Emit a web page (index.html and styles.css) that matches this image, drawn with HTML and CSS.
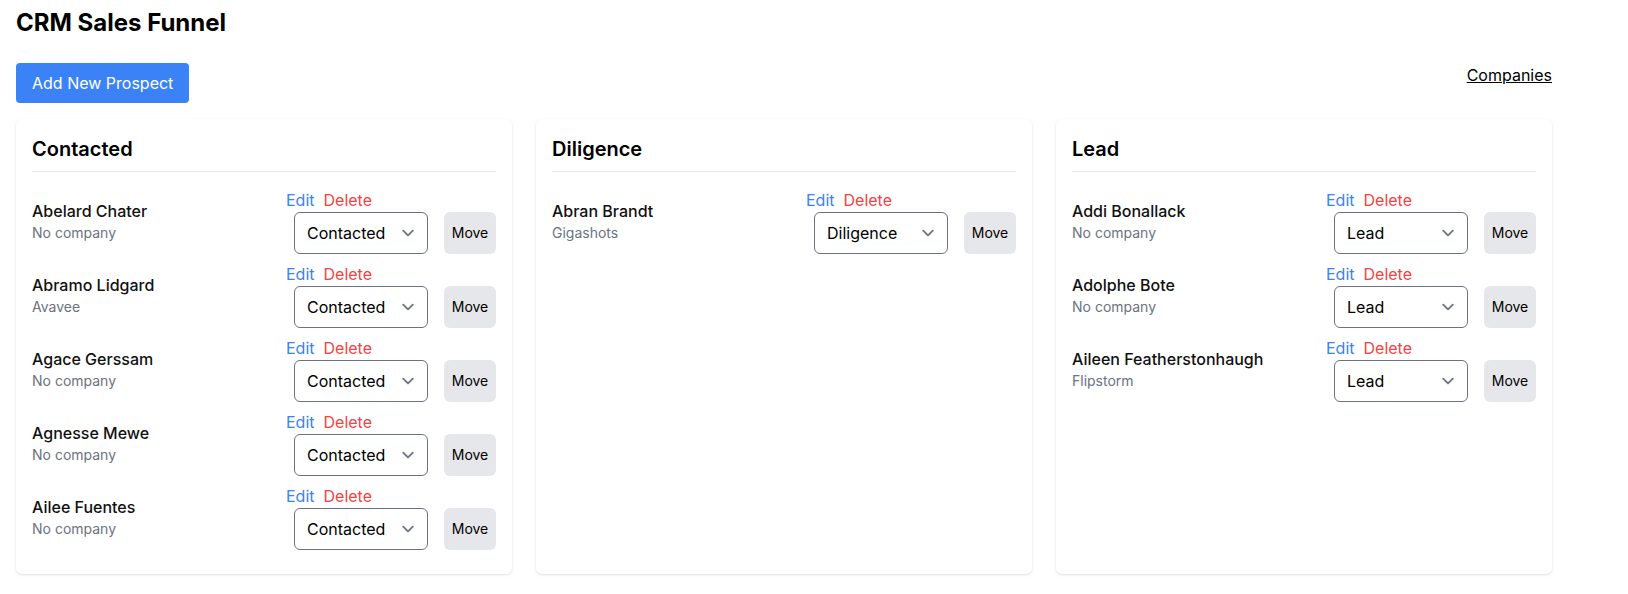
FILE: index.html
```html
<!DOCTYPE html>
<html lang="en">
<head>
<meta charset="utf-8">
<title>CRM Sales Funnel</title>
<link rel="stylesheet" href="styles.css">
</head>
<body>
<div class="page">
  <h1 class="title">CRM Sales Funnel</h1>
  <div class="toolbar">
    <button class="primary-btn">Add New Prospect</button>
    <a class="nav-link" href="#">Companies</a>
  </div>
  <div class="board">
    <section class="column">
      <h2 class="column-title">Contacted</h2>
      <div class="prospect">
        <div class="info"><div class="name">Abelard Chater</div><div class="company">No company</div></div>
        <div class="actions">
          <div class="links"><button class="link edit">Edit</button><button class="link delete">Delete</button></div>
          <div class="controls">
            <div class="select-wrap"><select class="status"><option>Lead</option><option selected>Contacted</option><option>Diligence</option></select><svg class="chevron" viewBox="0 0 20 20"><path d="M6 8l4 4 4-4"/></svg></div>
            <button class="move">Move</button>
          </div>
        </div>
      </div>
      <div class="prospect">
        <div class="info"><div class="name">Abramo Lidgard</div><div class="company">Avavee</div></div>
        <div class="actions">
          <div class="links"><button class="link edit">Edit</button><button class="link delete">Delete</button></div>
          <div class="controls">
            <div class="select-wrap"><select class="status"><option>Lead</option><option selected>Contacted</option><option>Diligence</option></select><svg class="chevron" viewBox="0 0 20 20"><path d="M6 8l4 4 4-4"/></svg></div>
            <button class="move">Move</button>
          </div>
        </div>
      </div>
      <div class="prospect">
        <div class="info"><div class="name">Agace Gerssam</div><div class="company">No company</div></div>
        <div class="actions">
          <div class="links"><button class="link edit">Edit</button><button class="link delete">Delete</button></div>
          <div class="controls">
            <div class="select-wrap"><select class="status"><option>Lead</option><option selected>Contacted</option><option>Diligence</option></select><svg class="chevron" viewBox="0 0 20 20"><path d="M6 8l4 4 4-4"/></svg></div>
            <button class="move">Move</button>
          </div>
        </div>
      </div>
      <div class="prospect">
        <div class="info"><div class="name">Agnesse Mewe</div><div class="company">No company</div></div>
        <div class="actions">
          <div class="links"><button class="link edit">Edit</button><button class="link delete">Delete</button></div>
          <div class="controls">
            <div class="select-wrap"><select class="status"><option>Lead</option><option selected>Contacted</option><option>Diligence</option></select><svg class="chevron" viewBox="0 0 20 20"><path d="M6 8l4 4 4-4"/></svg></div>
            <button class="move">Move</button>
          </div>
        </div>
      </div>
      <div class="prospect">
        <div class="info"><div class="name">Ailee Fuentes</div><div class="company">No company</div></div>
        <div class="actions">
          <div class="links"><button class="link edit">Edit</button><button class="link delete">Delete</button></div>
          <div class="controls">
            <div class="select-wrap"><select class="status"><option>Lead</option><option selected>Contacted</option><option>Diligence</option></select><svg class="chevron" viewBox="0 0 20 20"><path d="M6 8l4 4 4-4"/></svg></div>
            <button class="move">Move</button>
          </div>
        </div>
      </div>
    </section>

    <section class="column">
      <h2 class="column-title">Diligence</h2>
      <div class="prospect">
        <div class="info"><div class="name">Abran Brandt</div><div class="company">Gigashots</div></div>
        <div class="actions">
          <div class="links"><button class="link edit">Edit</button><button class="link delete">Delete</button></div>
          <div class="controls">
            <div class="select-wrap"><select class="status"><option>Lead</option><option>Contacted</option><option selected>Diligence</option></select><svg class="chevron" viewBox="0 0 20 20"><path d="M6 8l4 4 4-4"/></svg></div>
            <button class="move">Move</button>
          </div>
        </div>
      </div>
    </section>

    <section class="column">
      <h2 class="column-title">Lead</h2>
      <div class="prospect">
        <div class="info"><div class="name">Addi Bonallack</div><div class="company">No company</div></div>
        <div class="actions">
          <div class="links"><button class="link edit">Edit</button><button class="link delete">Delete</button></div>
          <div class="controls">
            <div class="select-wrap"><select class="status"><option selected>Lead</option><option>Contacted</option><option>Diligence</option></select><svg class="chevron" viewBox="0 0 20 20"><path d="M6 8l4 4 4-4"/></svg></div>
            <button class="move">Move</button>
          </div>
        </div>
      </div>
      <div class="prospect">
        <div class="info"><div class="name">Adolphe Bote</div><div class="company">No company</div></div>
        <div class="actions">
          <div class="links"><button class="link edit">Edit</button><button class="link delete">Delete</button></div>
          <div class="controls">
            <div class="select-wrap"><select class="status"><option selected>Lead</option><option>Contacted</option><option>Diligence</option></select><svg class="chevron" viewBox="0 0 20 20"><path d="M6 8l4 4 4-4"/></svg></div>
            <button class="move">Move</button>
          </div>
        </div>
      </div>
      <div class="prospect">
        <div class="info"><div class="name">Aileen Featherstonhaugh</div><div class="company">Flipstorm</div></div>
        <div class="actions">
          <div class="links"><button class="link edit">Edit</button><button class="link delete">Delete</button></div>
          <div class="controls">
            <div class="select-wrap"><select class="status"><option selected>Lead</option><option>Contacted</option><option>Diligence</option></select><svg class="chevron" viewBox="0 0 20 20"><path d="M6 8l4 4 4-4"/></svg></div>
            <button class="move">Move</button>
          </div>
        </div>
      </div>
    </section>
  </div>
</div>
</body>
</html>
```

FILE: styles.css
```css
* { box-sizing: border-box; }

html, body {
  margin: 0;
  padding: 0;
  background: #ffffff;
}

body {
  font-family: Inter, "Noto Sans", "Liberation Sans", sans-serif;
  color: #000000;
  font-size: 16px;
  line-height: 24px;
}

.page {
  max-width: 1568px;
  padding: 7px 16px 16px 16px;
}

.title {
  margin: 0 0 24px 0;
  font-size: 24px;
  line-height: 32px;
  font-weight: 700;
}

.toolbar {
  display: flex;
  justify-content: space-between;
  align-items: flex-start;
  margin-bottom: 16px;
}

.primary-btn {
  font-family: inherit;
  font-size: 16px;
  line-height: 24px;
  color: #ffffff;
  background: #3b82f6;
  border: none;
  border-radius: 4px;
  padding: 8px 16px;
  cursor: pointer;
}

.nav-link {
  color: #000000;
  text-decoration: underline;
  font-size: 16px;
  line-height: 24px;
}

.board {
  display: grid;
  grid-template-columns: repeat(3, 1fr);
  gap: 24px;
}

.column {
  background: #ffffff;
  border-radius: 6px;
  box-shadow: 0 1px 3px 0 rgba(0, 0, 0, 0.1), 0 1px 2px -1px rgba(0, 0, 0, 0.1);
  padding: 16px;
}

.column-title {
  margin: 0 0 16px 0;
  padding-bottom: 8px;
  border-bottom: 1px solid #e5e7eb;
  font-size: 20px;
  line-height: 28px;
  font-weight: 600;
}

.prospect {
  display: flex;
  justify-content: space-between;
  align-items: center;
  margin-bottom: 8px;
}

.name {
  font-size: 16px;
  line-height: 24px;
  font-weight: 500;
  color: #111111;
}

.company {
  font-size: 14px;
  line-height: 20px;
  color: #6b7280;
}

.actions {
  display: flex;
  flex-direction: column;
  align-items: flex-start;
}

.links {
  display: flex;
  gap: 9px;
}

.link {
  font-family: inherit;
  font-size: 16px;
  line-height: 24px;
  background: none;
  border: none;
  padding: 0;
  cursor: pointer;
}

.edit { color: #3b82f6; }
.delete { color: #ef4444; }

.controls {
  display: flex;
  gap: 16px;
  margin-left: 8px;
}

.select-wrap {
  position: relative;
  width: 134px;
  height: 42px;
}

.status {
  -webkit-appearance: none;
  appearance: none;
  width: 100%;
  height: 100%;
  font-family: inherit;
  font-size: 16px;
  line-height: 24px;
  color: #000000;
  background: #ffffff;
  border: 1px solid #6b7280;
  border-radius: 6px;
  padding: 0 40px 0 12px;
  margin: 0;
}

.chevron {
  position: absolute;
  right: 8px;
  top: 9px;
  width: 24px;
  height: 24px;
  fill: none;
  stroke: #6b7280;
  stroke-width: 1.5;
  stroke-linecap: round;
  stroke-linejoin: round;
  pointer-events: none;
}

.move {
  width: 52px;
  font-family: inherit;
  font-size: 14px;
  line-height: 20px;
  color: #000000;
  background: #e5e7eb;
  border: none;
  border-radius: 6px;
  padding: 0;
  text-align: center;
  cursor: pointer;
}
```
